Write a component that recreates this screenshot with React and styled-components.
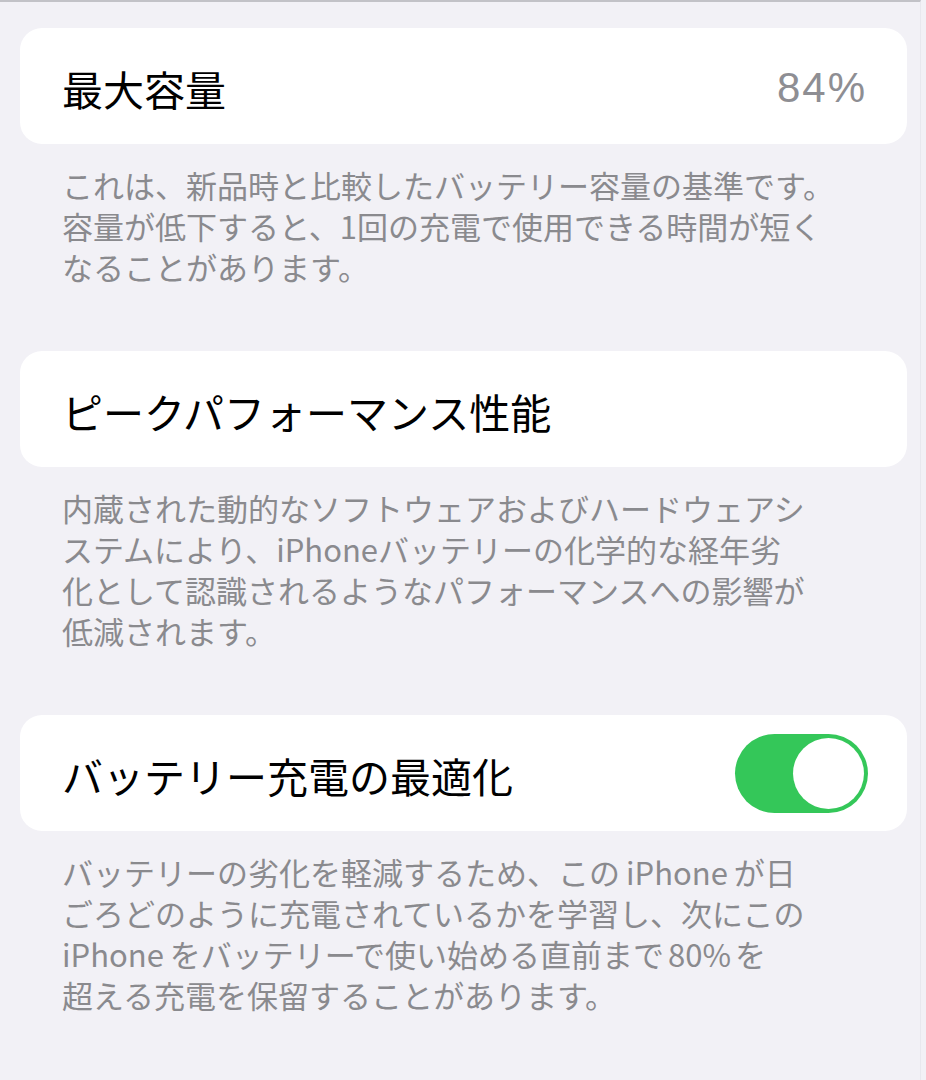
import React from "react";
import styled, { createGlobalStyle } from "styled-components";

const Global = createGlobalStyle`
  html, body { margin: 0; padding: 0; background: #f2f1f6; }
  body { font-family: "Noto Sans CJK JP", "Noto Sans", sans-serif; }
`;

const Page = styled.div`
  width: 921px;
  min-height: 1078px;
  border-top: 2px solid #c2c2c7;
  border-right: 1px solid #e8e8ee;
  background: #f2f1f6;
  padding: 26px 0 40px 20px;
  box-sizing: border-box;
  display: flex;
  flex-direction: column;
`;

const Section = styled.section`
  display: flex;
  flex-direction: column;
  margin-bottom: 64px;
`;

const Card = styled.div`
  width: 887px;
  height: 116px;
  box-sizing: border-box;
  background: #ffffff;
  border-radius: 22px;
  display: flex;
  align-items: center;
  justify-content: space-between;
  padding: 0 40px 0 42px;
`;

const Title = styled.div`
  font-size: 41px;
  color: #000;
  line-height: 1;
  margin-top: 4px;
`;

const Value = styled.div`
  font-family: "Liberation Sans", "Noto Sans", sans-serif;
  font-size: 42px;
  letter-spacing: 2px;
  color: #8e8e93;
  line-height: 1;
  margin-top: 4px;
`;

const Note = styled.p`
  margin: 20px 0 0 0;
  padding-left: 42px;
  font-size: 31px;
  line-height: 41px;
  color: #8a8a8e;
`;

const Latin = styled.span`
  margin: 0 ${(p) => p.$gap || 6}px;
  margin-left: ${(p) => (p.$start ? 0 : p.$gap || 6)}px;
`;

const Track = styled.div`
  width: 133px;
  height: 79px;
  border-radius: 40px;
  background: #34c759;
  box-sizing: border-box;
  padding: 4px;
  display: flex;
  justify-content: ${(p) => (p.$on ? "flex-end" : "flex-start")};
  align-items: center;
  margin-right: -1px;
`;

const Knob = styled.div`
  width: 71px;
  height: 71px;
  border-radius: 50%;
  background: #ffffff;
`;

export default function App() {
  return (
    <>
      <Global />
      <Page>
        <Section>
          <Card>
            <Title>最大容量</Title>
            <Value>84%</Value>
          </Card>
          <Note>
            これは、新品時と比較したバッテリー容量の基準です。
            <br />
            容量が低下すると、1回の充電で使用できる時間が短く
            <br />
            なることがあります。
          </Note>
        </Section>
        <Section>
          <Card>
            <Title>ピークパフォーマンス性能</Title>
          </Card>
          <Note>
            内蔵された動的なソフトウェアおよびハードウェアシ
            <br />
            ステムにより、iPhoneバッテリーの化学的な経年劣
            <br />
            化として認識されるようなパフォーマンスへの影響が
            <br />
            低減されます。
          </Note>
        </Section>
        <Section>
          <Card>
            <Title>バッテリー充電の最適化</Title>
            <Track $on>
              <Knob />
            </Track>
          </Card>
          <Note>
            バッテリーの劣化を軽減するため、この<Latin>iPhone</Latin>が日
            <br />
            ごろどのように充電されているかを学習し、次にこの
            <br />
            <Latin $start>iPhone</Latin>をバッテリーで使い始める直前まで<Latin $gap={4}>80%</Latin>を
            <br />
            超える充電を保留することがあります。
          </Note>
        </Section>
      </Page>
    </>
  );
}
